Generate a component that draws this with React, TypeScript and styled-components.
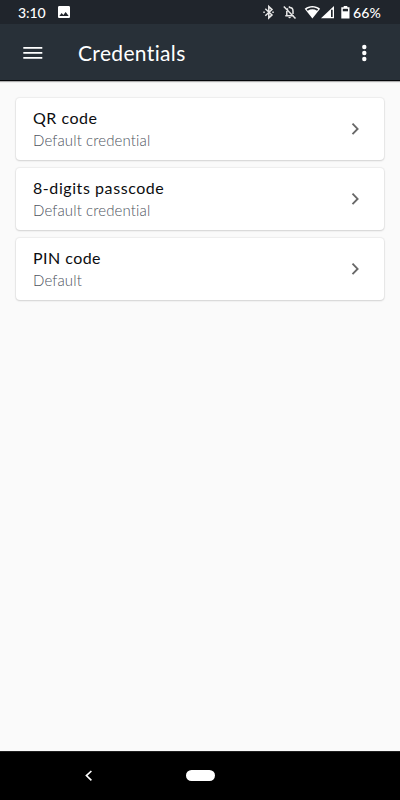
import React from "react";
import styled, { createGlobalStyle } from "styled-components";

const GlobalStyle = createGlobalStyle`
  * { box-sizing: border-box; }
  body { margin: 0; background: #fafafa; }
  svg { display: block; flex: none; }
`;

const Screen = styled.div`
  display: flex;
  flex-direction: column;
  width: 400px;
  height: 800px;
  background: #fafafa;
  font-family: Lato, "Liberation Sans", sans-serif;
  overflow: hidden;
`;

const StatusBar = styled.header`
  flex: none;
  display: flex;
  align-items: center;
  height: 24px;
  padding: 0 18px;
  background: #20252c;
  color: #fff;
`;

const StatusText = styled.span`
  padding-top: 2px;
  font-size: 14px;
  line-height: 22px;
  font-weight: 500;
  letter-spacing: 0.1px;
  white-space: nowrap;
`;

const Clock = styled(StatusText)`
  width: 38px;
  letter-spacing: -0.1px;
`;

const StatusIcons = styled.div`
  display: flex;
  align-items: center;
  margin-left: auto;
  width: 120px;
`;

const AppBar = styled.div`
  flex: none;
  display: flex;
  align-items: center;
  height: 57px;
  padding: 0 24px 0 20px;
  background: #283038;
  border-bottom: 1px solid #06080b;
  box-shadow: 0 1px 1px rgba(0, 0, 0, 0.3);
`;

const IconButton = styled.button`
  display: flex;
  padding: 0;
  border: 0;
  background: none;
  color: #fff;
`;

const Title = styled.h1`
  flex: 1;
  margin: 2px 0 0 33px;
  font-size: 21px;
  line-height: 28px;
  font-weight: 400;
  letter-spacing: 0.35px;
  color: #fff;
`;

const List = styled.main`
  flex: 1;
  display: flex;
  flex-direction: column;
  gap: 8px;
  padding: 17px 16px;
`;

const Card = styled.article`
  display: flex;
  align-items: center;
  justify-content: space-between;
  height: 62px;
  padding: 0 25px 0 17px;
  border-radius: 4px;
  background: #fff;
  box-shadow: 0 0 1px 0.5px rgba(0, 0, 0, 0.05), 0 1px 2px rgba(0, 0, 0, 0.12);
`;

const Name = styled.div<{ $spacing: number }>`
  font-size: 16px;
  line-height: 22px;
  letter-spacing: ${({ $spacing }) => $spacing}px;
  color: #0c0d10;
`;

const Detail = styled.div`
  font-size: 15px;
  line-height: 22px;
  font-weight: 300;
  letter-spacing: 0.12px;
  color: #4d545e;
`;

const NavBar = styled.nav`
  flex: none;
  display: flex;
  align-items: center;
  height: 49px;
  padding-left: 84px;
  background: #000;
  border-top: 1px solid #202020;
`;

const HomePill = styled.div`
  width: 29px;
  height: 11px;
  margin: -1px 0 0 93px;
  border-radius: 6px;
  background: #fff;
`;

const credentials = [
  { name: "QR code", detail: "Default credential", spacing: 0.5 },
  { name: "8-digits passcode", detail: "Default credential", spacing: 0.57 },
  { name: "PIN code", detail: "Default", spacing: 0.45 },
];

export default function App() {
  return (
    <>
      <GlobalStyle />
      <Screen>
        <StatusBar>
          <Clock>3:10</Clock>
          <svg width="16" height="16" viewBox="0 0 24 24" fill="#fff">
            <path d="M21 19V5c0-1.1-.9-2-2-2H5c-1.1 0-2 .9-2 2v14c0 1.1.9 2 2 2h14c1.1 0 2-.9 2-2zM8.500 13.500l2.500 3.010L14.500 12l4.500 6H5l3.500-4.500z" />
          </svg>
          <StatusIcons>
            <svg width="91" height="24" viewBox="262 0 91 24" fill="#e8e8e8">
              <g fill="none" stroke="#e8e8e8" strokeWidth="1.500">
                <path d="M265.300 8.700l6.700 6.200-3.200 3V6.600l3.200 3-6.700 6.200" />
                <path d="M285.300 15.700h8.500M286.800 15.500v-4.200c0-1.400.5-2.200 1.200-2.800M289.500 7.600c2.200 0 3.500 1.500 3.500 3.600v2.700M289.500 6.200v1.700M283.800 6.500l11.700 12" />
              </g>
              <path d="M263.300 11.500h1.500v1.500h-1.500zM272.300 11.500h1.500v1.500h-1.500zM288.400 17h2.400a1.200 1.200 0 0 1-2.400 0z" />
              <path d="M304.700 8.800c4.400-3.700 11-3.700 15.400 0L312.400 18.400z" fill="#fff" />
              <path d="M306.600 9.300c3.500-2.500 8.100-2.500 11.600 0l-1.100 1.400c-2.900-1.900-6.500-1.900-9.400 0z" fill="#20252c" />
              <path d="M334 6v12.300h-13z" fill="#fff" />
              <path d="M331 9.700h1.700v7.200H331z" fill="#20252c" />
              <path d="M341.300 7.300h2.400V6h3.600v1.300h2.200v11.200h-8.200z" fill="#fff" />
              <path d="M342.800 8.800h5.200v2.500h-5.200z" fill="#20252c" />
            </svg>
            <StatusText>66%</StatusText>
          </StatusIcons>
        </StatusBar>
        <AppBar>
          <IconButton aria-label="Menu">
            <svg width="25" height="26" viewBox="0 0 25 26" fill="currentColor">
              <path d="M3.300 8h19v1.700h-19zM3.300 13h19v1.700h-19zM3.300 18h19v1.700h-19z" />
            </svg>
          </IconButton>
          <Title>Credentials</Title>
          <IconButton aria-label="More options">
            <svg width="24" height="24" viewBox="0 0 24 24" fill="currentColor">
              <circle cx="12.300" cy="7" r="2.200" />
              <circle cx="12.300" cy="13" r="2.200" />
              <circle cx="12.300" cy="19" r="2.200" />
            </svg>
          </IconButton>
        </AppBar>
        <List>
          {credentials.map(({ name, detail, spacing }) => (
            <Card key={name}>
              <div>
                <Name $spacing={spacing}>{name}</Name>
                <Detail>{detail}</Detail>
              </div>
              <svg width="8" height="12" viewBox="0 0 8 12" fill="none" stroke="#686868" strokeWidth="1.900">
                <path d="M1.500 0.700L6.600 5.900l-5.100 5.200" />
              </svg>
            </Card>
          ))}
        </List>
        <NavBar>
          <svg width="9" height="12" viewBox="0 0 9 12" fill="none" stroke="#fff" strokeWidth="1.600">
            <path d="M7.400 1L2.400 5.600l5 4.700" />
          </svg>
          <HomePill />
        </NavBar>
      </Screen>
    </>
  );
}
